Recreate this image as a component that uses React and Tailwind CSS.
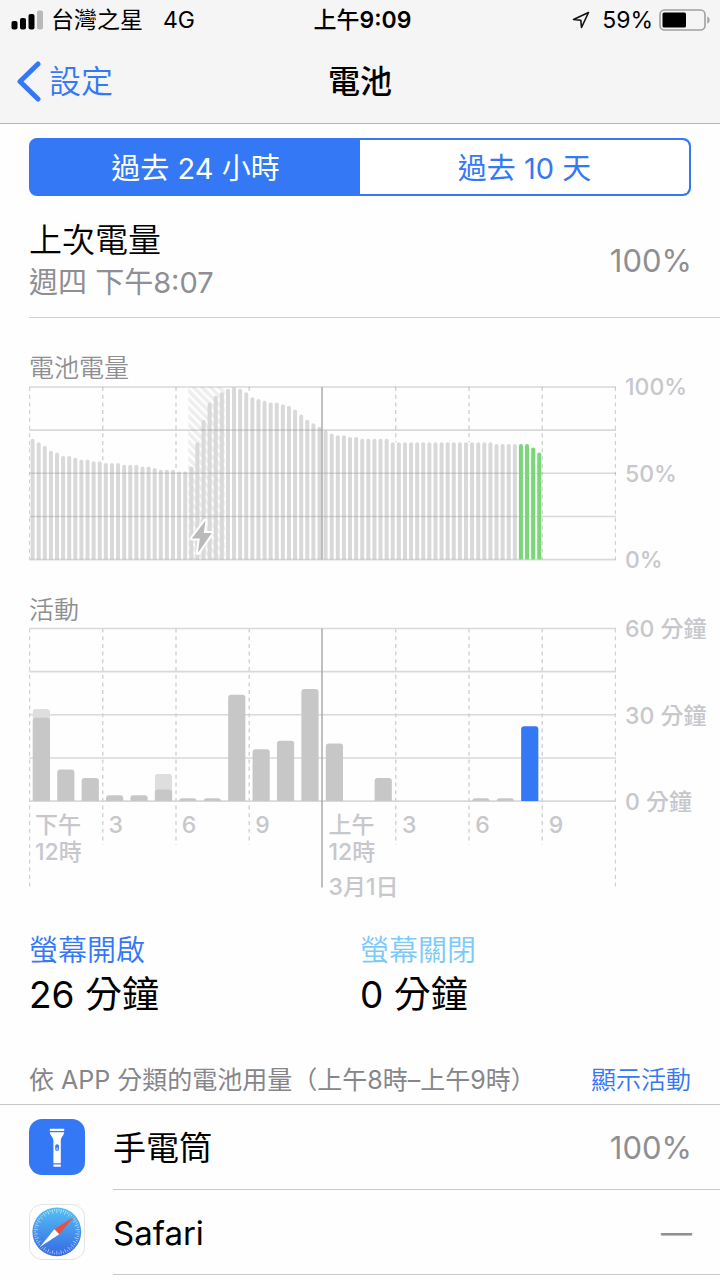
import React from 'react';

const BATTERY_LEVELS = [
  70, 68, 66, 63, 62, 60, 60, 59, 58, 58, 57, 57, 56, 56, 56, 55, 55, 55, 54, 54, 53, 52, 52, 52, 51, 51,
  54, 68, 81, 91, 95, 97, 99, 100, 99, 97, 94, 93, 92, 91, 91, 90, 89, 87, 84, 81, 79, 77, 75, 73, 72,
  72, 71, 71, 70, 70, 70, 70, 70, 68, 68, 68, 68, 68, 68, 68, 68, 68, 68, 68, 68, 68, 68, 68, 68, 68,
  67, 67, 67, 67, 67, 67, 65, 62,
];

// minutes per hour slot: screen on, total
const ACTIVITY = [
  [29, 32], [11, 11], [8, 8], [2, 2], [2, 2], [4, 9.4], [1, 1], [1, 1], [37, 37], [18, 18], [21, 21], [39, 39],
  [20, 20], [0, 0], [8, 8], [0, 0], [0, 0], [0, 0], [1, 1], [1, 1], [26, 26],
];

const HOURS = [['下午', '12時'], ['3'], ['6'], ['9'], ['上午', '12時', '3月1日'], ['3'], ['6'], ['9']];

const PLOT_WIDTH = 586;
const PLOT_HEIGHT = 172.6;
const SLOTS = [0, 1, 2, 3, 4, 5, 6, 7, 8];

const HorizontalLines = () => (
  <g stroke="#8e8e93" strokeOpacity="0.33" strokeWidth="1.6">
    {[0, 1, 2, 3, 4].map((i) => (
      <line key={i} x1="0" x2={PLOT_WIDTH + 0.5} y1={(PLOT_HEIGHT / 4) * i} y2={(PLOT_HEIGHT / 4) * i} />
    ))}
  </g>
);

const roundedTop = (x, top, width, bottom, r) => {
  const radius = Math.min(r, bottom - top);
  return `M${x} ${bottom}V${top + radius}q0 ${-radius} ${radius} ${-radius}h${width - radius * 2}q${radius} 0 ${radius} ${radius}V${bottom}z`;
};

const BatteryChart = () => {
  const step = PLOT_WIDTH / 96;
  return (
    <svg viewBox="-0.5 -2 587 177" className="block w-full" role="img" aria-label="電池電量">
      <defs>
        <pattern id="charging" width="6" height="6" patternUnits="userSpaceOnUse" patternTransform="rotate(-45)">
          <rect width="6" height="6" fill="#fff" />
          <rect width="3.6" height="6" fill="#eeeeee" />
        </pattern>
      </defs>
      <g stroke="#d2d2d4" strokeWidth="1.4" strokeDasharray="4 3.7">
        {SLOTS.filter((i) => i !== 4).map((i) => (
          <line key={i} x1={(PLOT_WIDTH / 8) * i} x2={(PLOT_WIDTH / 8) * i} y1="0" y2={PLOT_HEIGHT} />
        ))}
      </g>
      {BATTERY_LEVELS.map((level, i) => (
        <rect
          key={i}
          x={i * step + 0.6}
          y={PLOT_HEIGHT * (1 - level / 100)}
          width={i === 83 ? step - 1.6 : step + 0.2}
          height={(PLOT_HEIGHT * level) / 100}
          fill="#fff"
        />
      ))}
      <rect x={step * 26} y="0" width={step * 6} height={PLOT_HEIGHT} fill="url(#charging)" />
      {BATTERY_LEVELS.slice(0, 80).map((level, i) => (
        <path
          key={i}
          d={roundedTop(i * step + 1.1, PLOT_HEIGHT * (1 - level / 100), 4, PLOT_HEIGHT, 2)}
          fill="#d9d9d9"
        />
      ))}
      <HorizontalLines />
      {/* keep the selected hour above the grid */}
      {BATTERY_LEVELS.slice(80).map((level, i) => (
        <path
          key={i}
          d={roundedTop((i + 80) * step + 1.1, PLOT_HEIGHT * (1 - level / 100), 4, PLOT_HEIGHT, 2)}
          fill="#76d975"
        />
      ))}
      <line x1="292.5" x2="292.5" y1="0" y2={PLOT_HEIGHT} stroke="#a5a5a7" strokeWidth="1.4" />
      <path
        d="M176 133.500 162.300 151.500h8l-2 14.500 14-20h-8z"
        fill="#bababa"
        stroke="#fff"
        strokeWidth="4"
        strokeLinejoin="round"
        paintOrder="stroke"
      />
    </svg>
  );
};

const ActivityChart = () => {
  const step = PLOT_WIDTH / 24;
  const toY = (minutes) => PLOT_HEIGHT * (1 - minutes / 60);
  return (
    <svg viewBox="-0.5 -2.5 587 263" className="block w-full col-start-1 row-start-1" role="img" aria-label="活動">
      <HorizontalLines />
      <g stroke="#d2d2d4" strokeWidth="1.4" strokeDasharray="4 3.7">
        {SLOTS.filter((i) => i !== 4).map((i) => (
          <line key={i} x1={(PLOT_WIDTH / 8) * i} x2={(PLOT_WIDTH / 8) * i} y1="0" y2={i % 8 === 0 ? 259 : 216} />
        ))}
      </g>
      {ACTIVITY.map(([on, total], i) => (
        <g key={i}>
          {total > on && <path d={roundedTop(i * step + 3.3, toY(total), 17.2, PLOT_HEIGHT, 3)} fill="#dedede" />}
          {on > 0 && (
            <path
              d={roundedTop(i * step + 3.3, toY(on), 17.2, PLOT_HEIGHT, 3)}
              fill={i === 20 ? '#3478f6' : '#c7c7c7'}
            />
          )}
        </g>
      ))}
      <line x1="292.5" x2="292.5" y1="0" y2="259" stroke="#a5a5a7" strokeWidth="1.4" />
    </svg>
  );
};

const FlashlightIcon = () => (
  <svg viewBox="0 0 56 56" className="w-14 h-14 shrink-0 self-start mt-3.5" aria-hidden="true">
    <rect width="56" height="56" rx="13" fill="#3478f6" />
    <path d="M20.8 9.8h14.400v2.200H20.800zM20.800 13.200h14.400c0 3-3.400 4.800-3.400 8.300v22.700h-7.400V21.500c0-3.500-3.600-5.300-3.600-8.300zM24.400 45.400h7.400v2.400h-7.400z" fill="#fff" />
    <rect x="26.2" y="25.2" width="3.8" height="6.6" rx="1.9" fill="#3478f6" />
    <circle cx="28.1" cy="29.6" r="1.2" fill="#9dc0fb" />
  </svg>
);

const SafariIcon = () => (
  <svg viewBox="0 0 56 56" className="w-14 h-14 shrink-0 self-start mt-3.5" aria-hidden="true">
    <defs>
      <linearGradient id="compass" x1="0" y1="0" x2="0" y2="1">
        <stop offset="0" stopColor="#56c1f5" />
        <stop offset="1" stopColor="#3567e4" />
      </linearGradient>
    </defs>
    <rect x="0.5" y="0.5" width="55" height="55" rx="12.5" fill="#fff" stroke="#e3e3e3" />
    <circle cx="27.8" cy="27.8" r="24.4" fill="url(#compass)" />
    <g stroke="#fff" strokeWidth="0.7" strokeOpacity="0.7">
      {Array.from({ length: 60 }, (_, i) => (
        <line key={i} x1="27.8" x2="27.8" y1="5" y2={i % 2 ? 7 : 9} transform={`rotate(${i * 6} 27.8 27.8)`} />
      ))}
    </g>
    <path d="M45 12.800 30.300 30.300 25.300 25.300z" fill="#ec4f41" />
    <path d="M11.200 42.800 25.300 25.300 30.300 30.300z" fill="#fff" />
  </svg>
);

const StatusBar = () => (
  <div className="grid grid-cols-[1fr_auto_1fr] items-center h-10 pl-[11px] pr-[10px] text-[23px] leading-[30px]">
    <div className="flex items-center">
      <svg viewBox="0 0 32 20" className="w-8 h-5" aria-hidden="true">
        <rect x="0.5" y="11" width="6" height="8.5" rx="2" />
        <rect x="9" y="8" width="6" height="11.5" rx="2" />
        <rect x="17.5" y="4" width="6" height="15.5" rx="2" />
        <rect x="26" y="0.5" width="6" height="19" rx="2" fill="#b9b9b9" />
      </svg>
      <span className="ml-2">台灣之星</span>
      <span className="ml-5">4G</span>
    </div>
    <div className="pl-1 font-medium">上午<span className="font-semibold">9:09</span></div>
    <div className="flex items-center justify-end">
      <svg viewBox="0 0 18 18" className="w-[18px] h-[18px] mr-3" fill="none" stroke="#111" strokeWidth="1.6" strokeLinejoin="round" aria-hidden="true">
        <path d="M16.500 1.500 1.500 8.500l7.300.700.700 7.300z" />
      </svg>
      <span>59%</span>
      <svg viewBox="0 0 51 22" className="w-[51px] h-[22px] ml-1.5" aria-hidden="true">
        <rect x="1" y="1" width="45" height="20" rx="4.5" fill="none" stroke="#a0a0a0" strokeWidth="1.6" />
        <rect x="3.5" y="3.5" width="23.5" height="15" rx="1.5" />
        <path d="M48.300 7.500c3 1.200 3 6 0 7.200z" fill="#a0a0a0" />
      </svg>
    </div>
  </div>
);

const AppRow = ({ icon, name, value }) => (
  <li className="flex items-center pl-[29px]">
    {icon}
    <div className="flex flex-1 items-center justify-between h-[85px] ml-7 pt-0.5 pr-7 border-b border-[#c8c7cc]">
      <span>{name}</span>
      <span className="text-[31px] text-[#8e8e93]">{value}</span>
    </div>
  </li>
);

export default function App() {
  return (
    <div className="min-h-screen bg-[#fefefe] text-black font-['Inter','Noto_Sans_CJK_TC',sans-serif]" lang="zh-Hant">
      <header className="bg-[#f5f5f6] border-b border-[#b6b6b8]">
        <StatusBar />
        <nav className="grid grid-cols-[1fr_auto_1fr] items-center h-[83px] px-4 text-[32px] leading-[44px]">
          <button className="flex items-center gap-2 text-[#3478f6]">
            <svg viewBox="0 0 25 42" className="w-[25px] h-[42px]" fill="none" stroke="currentColor" strokeWidth="5" strokeLinecap="round" strokeLinejoin="round" aria-hidden="true">
              <path d="M22 3 4 20.500l18 17.500" />
            </svg>
            <span className="font-[350]">設定</span>
          </button>
          <h1 className="font-medium">電池</h1>
        </nav>
      </header>

      <main className="text-[33px] leading-[44px]">
        <div className="mx-[29px] mt-3.5 grid grid-cols-2 h-[58px] rounded-lg border-2 border-[#3478f6] bg-[#3478f6] overflow-hidden text-[29px] leading-[42px]">
          <button className="pt-1 bg-[#3478f6] text-white" aria-pressed="true">過去 24 小時</button>
          <button className="pt-1 rounded-r-md bg-white text-[#3478f6]" aria-pressed="false">過去 10 天</button>
        </div>

        <section className="flex items-center justify-between ml-[29px] pr-7 pt-[22px] pb-[13px] border-b border-[#d0d0d3]">
          <div>
            <h2 className="font-[350]">上次電量</h2>
            <p className="text-[29px] leading-[42px] text-[#8e8e93]">週四 下午8:07</p>
          </div>
          <span className="text-[31px] text-[#8e8e93]">100%</span>
        </section>

        <section className="pl-[29px] pt-[35px] text-[23px] leading-[30px]">
          <h3 className="text-[25px] font-[350] text-[#8e8e93]">電池電量</h3>
          <div className="flex mt-0.5">
            <div className="flex-1"><BatteryChart /></div>
            <div className="flex flex-col justify-between w-[104px] -my-[13px] pl-[9px] font-medium text-[#c7c7cc]">
              <span>100%</span>
              <span>50%</span>
              <span>0%</span>
            </div>
          </div>

          <h3 className="mt-[33px] text-[25px] font-[350] text-[#8e8e93]">活動</h3>
          <div className="flex items-start mt-px">
            <div className="grid flex-1">
              <ActivityChart />
              <div className="col-start-1 row-start-1 grid grid-cols-8 pt-[186px] leading-[27px] font-medium text-[#c7c7cc]">
                {HOURS.map(([top, bottom, date], i) => (
                  <div key={i} className="flex flex-col pl-1.5 whitespace-nowrap">
                    <span>{top}</span>
                    {bottom && <span>{bottom}</span>}
                    {date && <span className="mt-2">{date}</span>}
                  </div>
                ))}
              </div>
            </div>
            <div className="flex flex-col justify-between w-[104px] h-[203px] -mt-3 pl-[9px] font-medium text-[#c7c7cc] whitespace-nowrap">
              <span>60 分鐘</span>
              <span>30 分鐘</span>
              <span>0 分鐘</span>
            </div>
          </div>
        </section>

        <section className="grid grid-cols-2 px-[29px] mt-[30px]">
          <div>
            <h3 className="text-[29px] leading-[40px] font-[350] text-[#3478f6]">螢幕開啟</h3>
            <p className="text-[37px] leading-[48px]">26 分鐘</p>
          </div>
          <div>
            <h3 className="text-[29px] leading-[40px] font-[350] text-[#7ccafa]">螢幕關閉</h3>
            <p className="text-[37px] leading-[48px]">0 分鐘</p>
          </div>
        </section>

        <section className="mt-[43px]">
          <div className="flex justify-between px-[29px] pb-1.5 text-[25px] leading-[36px] border-b border-[#c8c7cc] whitespace-nowrap">
            <h3 className="text-[#86868a]">依 APP 分類的電池用量（上午8時–上午9時）</h3>
            <button className="font-[350] text-[#3478f6]">顯示活動</button>
          </div>
          <ul>
            <AppRow icon={<FlashlightIcon />} name="手電筒" value="100%" />
            <AppRow icon={<SafariIcon />} name="Safari" value="—" />
          </ul>
        </section>
      </main>
    </div>
  );
}
